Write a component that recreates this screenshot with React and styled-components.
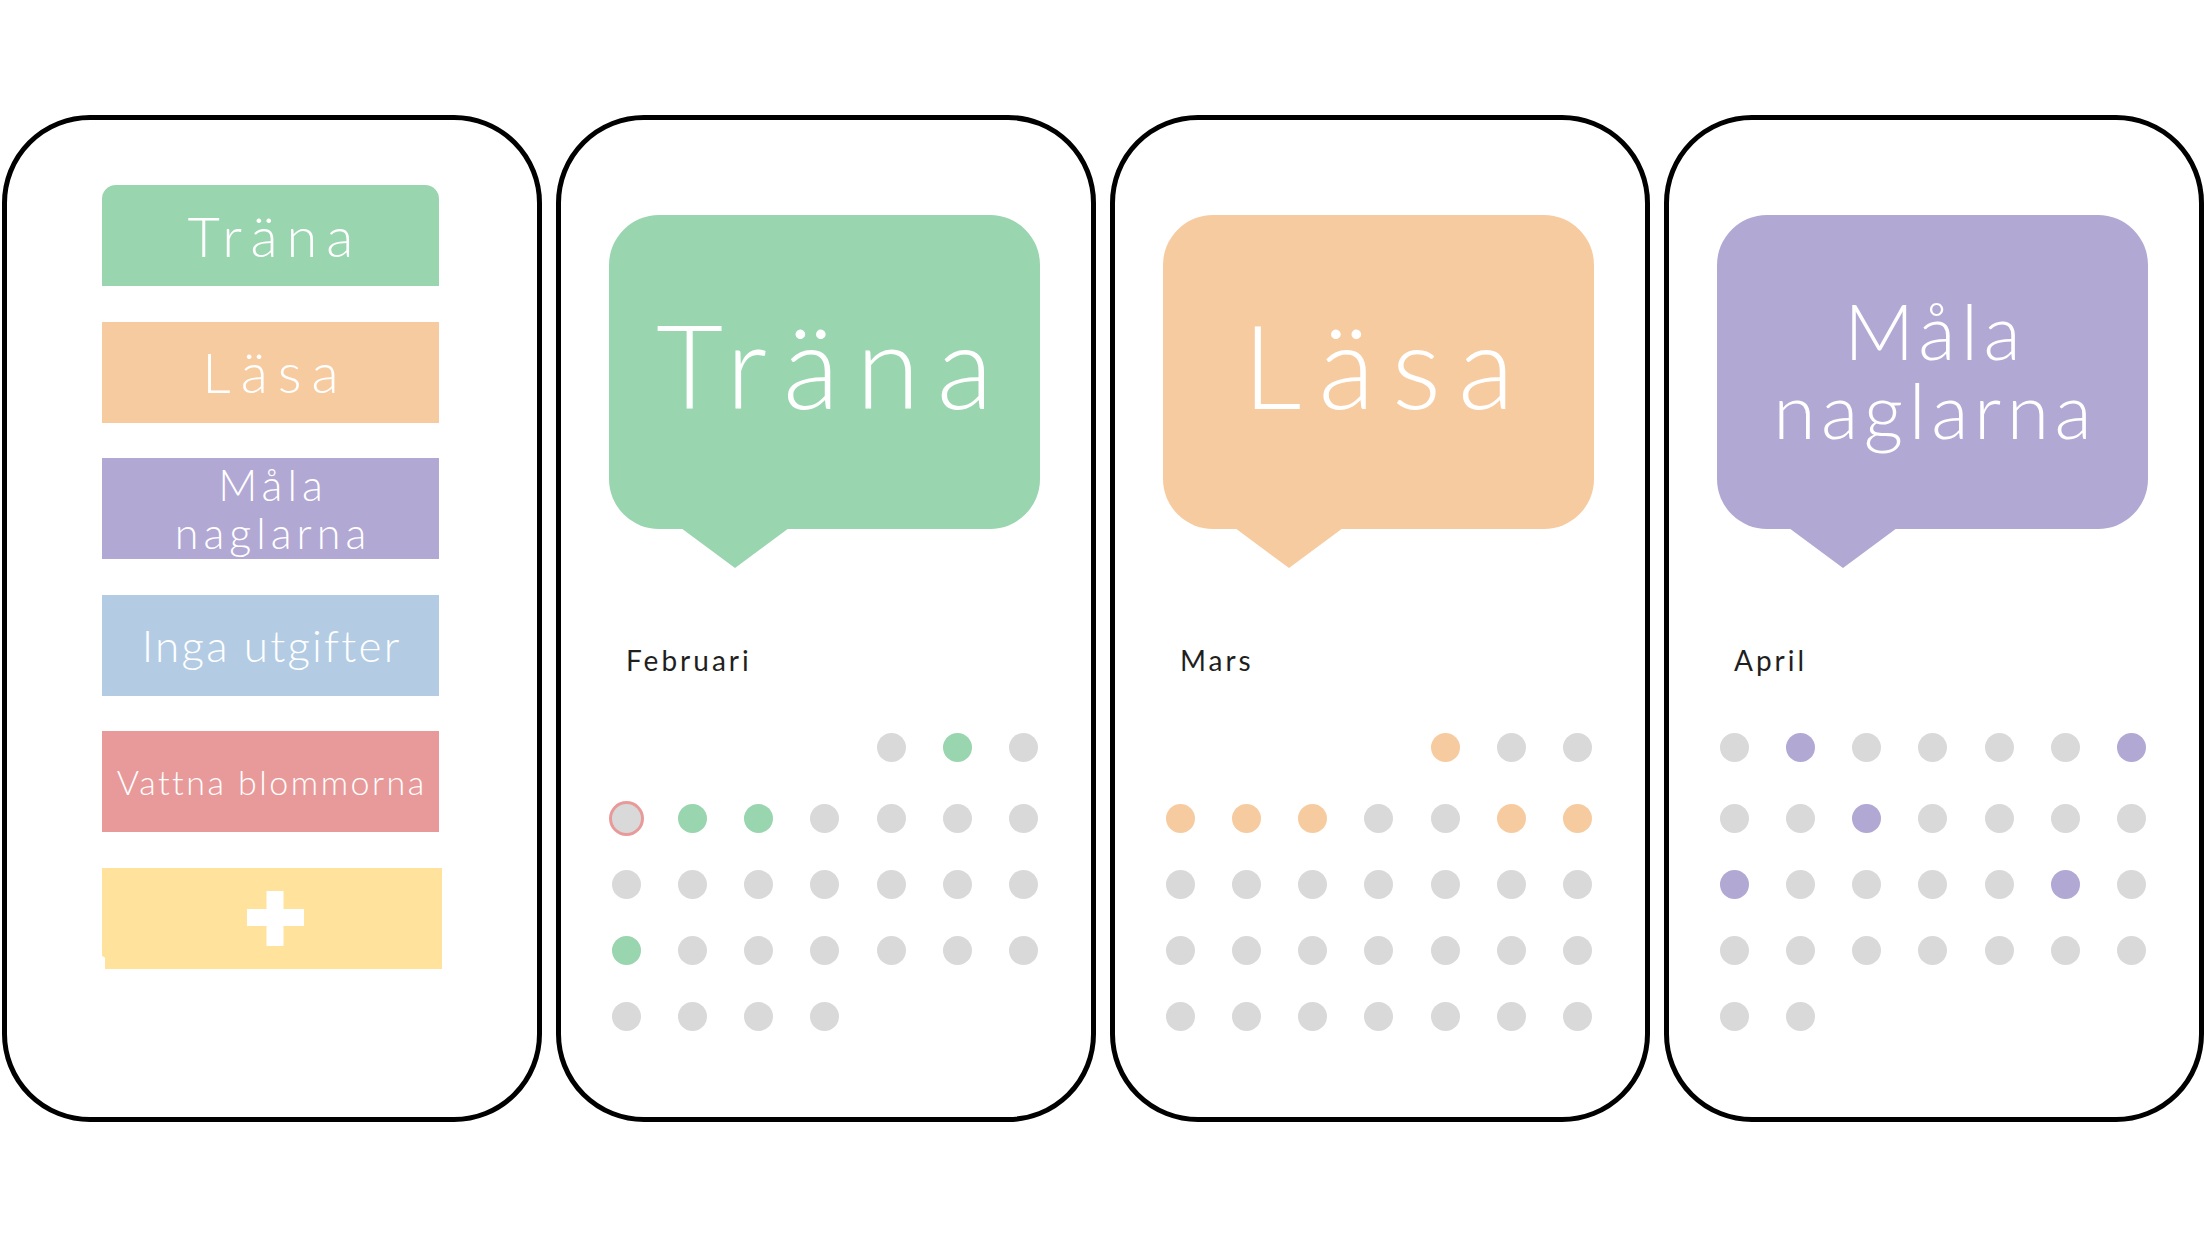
import React from 'react';
import styled, { createGlobalStyle } from 'styled-components';

const GlobalStyle = createGlobalStyle`
  html, body { margin: 0; padding: 0; background: #ffffff; }
  body { font-family: Lato, "Noto Sans", sans-serif; }
`;

const COLORS = {
  green: '#99d5af',
  orange: '#f7cba0',
  purple: '#b2a8d4',
  blue: '#b3cce4',
  red: '#e89a9a',
  yellow: '#ffe39d',
  grey: '#d9d9d9',
};

const Page = styled.div`
  width: 2204px;
  height: 1239px;
  box-sizing: border-box;
  padding: 115px 0 0 2px;
  display: flex;
  align-items: flex-start;
  gap: 14px;
  background: #fff;
`;

const Card = styled.section`
  box-sizing: border-box;
  flex: 0 0 540px;
  width: 540px;
  height: 1007px;
  border: 5px solid #000;
  border-radius: 88px;
  background: #fff;
  display: flex;
  flex-direction: column;
`;

const MenuCard = styled(Card)`
  align-items: center;
  padding: 65px 3px 0 0;
  gap: 35.6px;
`;

const DetailCard = styled(Card)`
  align-items: flex-start;
  padding: 95px 0 0 48px;
`;

const HabitButton = styled.div`
  box-sizing: border-box;
  width: 337px;
  height: 101px;
  background: ${(p) => p.$color};
  border-radius: ${(p) => (p.$rounded ? '14px 14px 0 0' : '0')};
  display: flex;
  align-items: center;
  justify-content: center;
  text-align: center;
  color: #fff;
  font-family: Lato, "Noto Sans", sans-serif;
  font-weight: 300;
  font-size: ${(p) => p.$size}px;
  line-height: ${(p) => p.$lh || p.$size}px;
  letter-spacing: ${(p) => p.$ls || 0}px;
  text-indent: ${(p) => p.$ls || 0}px;
`;

const AddButton = styled.div`
  box-sizing: border-box;
  width: 340px;
  height: 101px;
  margin-left: 3px;
  background: ${COLORS.yellow};
  display: flex;
  align-items: center;
  justify-content: center;
  padding-left: 6px;
  clip-path: polygon(0 0, 100% 0, 100% 100%, 3px 100%, 3px 89%, 0 87%);
`;

const Bubble = styled.div`
  position: relative;
  box-sizing: border-box;
  width: 431px;
  height: 314px;
  border-radius: 50px;
  background: ${(p) => p.$color};
  display: flex;
  align-items: center;
  justify-content: center;
  padding-bottom: ${(p) => p.$pb}px;
  text-align: center;
  color: #fff;
  font-family: Lato, "Noto Sans", sans-serif;
  font-weight: 300;
  font-size: ${(p) => p.$size}px;
  line-height: ${(p) => p.$lh}px;
  letter-spacing: ${(p) => p.$ls}px;
  text-indent: ${(p) => p.$ls}px;

  &::after {
    content: '';
    position: absolute;
    left: 72px;
    top: 313px;
    width: 108px;
    height: 40px;
    background: ${(p) => p.$color};
    clip-path: polygon(0 0, 100% 0, 50% 100%);
  }
`;

const MonthLabel = styled.div`
  margin: 117px 0 0 17px;
  height: 28px;
  font-family: Lato, "Noto Sans", sans-serif;
  font-weight: 400;
  font-size: 28px;
  line-height: 28px;
  letter-spacing: 3px;
  color: #1f1f1f;
`;

const Calendar = styled.div`
  margin: 58.5px 0 0 3px;
  width: 426px;
  display: grid;
  grid-template-columns: repeat(7, 29px);
  grid-template-rows: 34px repeat(4, 29px);
  justify-content: space-between;
  align-items: start;
  row-gap: 37px;
`;

const Dot = styled.span`
  display: block;
  width: 29px;
  height: 29px;
  border-radius: 50%;
  background: ${(p) => p.$color};
  box-shadow: ${(p) => (p.$ring ? `0 0 0 3px ${COLORS.red}` : 'none')};
`;

const EmptyCell = styled.span`
  display: block;
  width: 29px;
  height: 29px;
`;

const Line = styled.span`
  display: block;
`;

const PlusIcon = () => (
  <svg width="57" height="55" viewBox="0 0 57 55" aria-hidden="true">
    <path d="M19.5 0 H36.5 V18 H57 V35 H36.5 V55 H19.5 V35 H0 V18 H19.5 Z" fill="#fff" />
  </svg>
);

const months = [
  {
    title: 'Träna',
    color: COLORS.green,
    size: 116,
    lh: 116,
    ls: 17,
    pb: 14,
    month: 'Februari',
    rows: ['....oxo', 'rxxoooo', 'ooooooo', 'xoooooo', 'oooo'],
  },
  {
    title: 'Läsa',
    color: COLORS.orange,
    size: 116,
    lh: 116,
    ls: 17,
    pb: 14,
    month: 'Mars',
    rows: ['....xoo', 'xxxooxx', 'ooooooo', 'ooooooo', 'ooooooo'],
  },
  {
    title: ['Måla', 'naglarna'],
    color: COLORS.purple,
    size: 77,
    lh: 79,
    ls: 5.5,
    pb: 4,
    month: 'April',
    rows: ['oxoooox', 'ooxoooo', 'xooooxo', 'ooooooo', 'oo'],
  },
];

const habits = [
  { label: 'Träna', color: COLORS.green, size: 56, ls: 9, rounded: true },
  { label: 'Läsa', color: COLORS.orange, size: 56, ls: 10 },
  { label: ['Måla', 'naglarna'], color: COLORS.purple, size: 43, lh: 48, ls: 5 },
  { label: 'Inga utgifter', color: COLORS.blue, size: 44, ls: 2.2 },
  { label: 'Vattna blommorna', color: COLORS.red, size: 34, ls: 2.5 },
];

const renderLines = (text) =>
  Array.isArray(text) ? text.map((line, i) => <Line key={i}>{line}</Line>) : text;

const MonthCard = ({ data }) => (
  <DetailCard>
    <Bubble $color={data.color} $size={data.size} $lh={data.lh} $ls={data.ls} $pb={data.pb}>
      <div>{renderLines(data.title)}</div>
    </Bubble>
    <MonthLabel>{data.month}</MonthLabel>
    <Calendar>
      {data.rows.map((row, r) =>
        row.split('').map((c, i) => {
          const key = `${r}-${i}`;
          if (c === '.') return <EmptyCell key={key} />;
          if (c === 'x') return <Dot key={key} $color={data.color} />;
          if (c === 'r') return <Dot key={key} $color={COLORS.grey} $ring />;
          return <Dot key={key} $color={COLORS.grey} />;
        })
      )}
    </Calendar>
  </DetailCard>
);

export default function App() {
  return (
    <>
      <GlobalStyle />
      <Page>
        <MenuCard>
          {habits.map((h, i) => (
            <HabitButton
              key={i}
              $color={h.color}
              $size={h.size}
              $lh={h.lh}
              $ls={h.ls}
              $rounded={h.rounded}
            >
              <div>{renderLines(h.label)}</div>
            </HabitButton>
          ))}
          <AddButton>
            <PlusIcon />
          </AddButton>
        </MenuCard>
        {months.map((m, i) => (
          <MonthCard key={i} data={m} />
        ))}
      </Page>
    </>
  );
}
